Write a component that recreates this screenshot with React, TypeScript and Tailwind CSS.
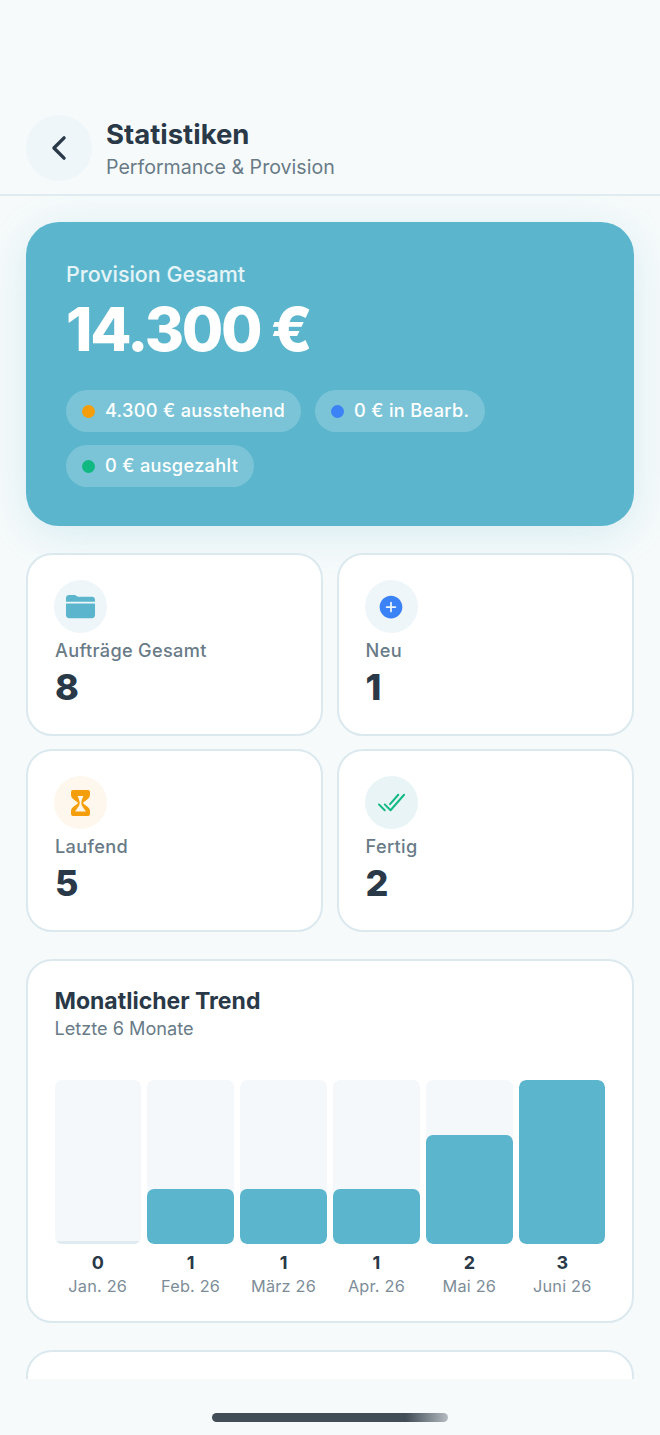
import { IoAddCircle, IoCheckmarkDone, IoChevronBack, IoFolder } from "react-icons/io5";
import type { ReactNode } from "react";

const months = [
  { label: "Jan. 26", value: 0 },
  { label: "Feb. 26", value: 1 },
  { label: "März 26", value: 1 },
  { label: "Apr. 26", value: 1 },
  { label: "Mai 26", value: 2 },
  { label: "Juni 26", value: 3 },
];

function Pill({ dot, children }: { dot: string; children: ReactNode }) {
  return (
    <div className="flex h-[42px] items-center gap-[10px] rounded-full bg-white/20 px-[16px] text-[18.15px] font-medium tracking-[0.33px] text-white">
      <span className={`h-[13px] w-[13px] rounded-full ${dot}`} />
      <span>{children}</span>
    </div>
  );
}

function StatCard({ icon, iconBg, label, value }: { icon: ReactNode; iconBg: string; label: string; value: number }) {
  return (
    <div className="h-[183px] rounded-[26px] border-2 border-[#dbe9ef] bg-white pl-[26px] pt-[25px]">
      <div className={`flex h-[53px] w-[53px] items-center justify-center rounded-full ${iconBg}`}>{icon}</div>
      <div className="mt-[5px] pl-[1px] text-[18.15px] leading-[24px] font-medium tracking-[0.33px] text-[#697b87]">{label}</div>
      <div className="mt-[2px] pl-[1px] text-[36px] leading-[46px] font-extrabold text-[#2a3947]">{value}</div>
    </div>
  );
}

function Hourglass() {
  return (
    <svg width="19" height="26" viewBox="0 0 19 26">
      <path
        fill="#f59e0b"
        d="M2 0H17a2 2 0 0 1 2 2V5C19 9 13 11 12 13C13 15 19 17 19 21V24a2 2 0 0 1-2 2H2a2 2 0 0 1-2-2V21C0 17 6 15 7 13C6 11 0 9 0 5V2a2 2 0 0 1 2-2Z"
      />
      <path
        fill="#fff6e8"
        d="M6.5 6h6C11.5 8 10.5 10 10.3 13C10.5 16 12 17 15 21.5H4C7 17 8.5 16 8.7 13C8.5 10 7.5 8 6.5 6Z"
      />
    </svg>
  );
}

export default function App() {
  return (
    <div className="flex h-[1435px] w-[660px] flex-col overflow-hidden bg-[#f6fafb] font-['Inter',sans-serif]">
      {/* Header */}
      <header className="flex h-[196px] shrink-0 items-start gap-[14px] border-b-2 border-[#dfebf0] px-[26px] pt-[115px]">
        <button type="button" className="flex h-[66px] w-[66px] items-center justify-center rounded-full bg-[#eff6f9] text-[#2a3947]">
          <IoChevronBack size={36} />
        </button>
        <div>
          <h1 className="text-[27.5px] leading-[38px] font-bold text-[#2a3947]">Statistiken</h1>
          <p className="mt-[1px] text-[19.6px] leading-[26px] text-[#697b87]">Performance &amp; Provision</p>
        </div>
      </header>

      <main className="flex h-[1183px] shrink-0 flex-col overflow-hidden px-[26px] pt-[26px]">
        {/* Hero */}
        <section className="h-[304px] shrink-0 rounded-[33px] bg-[#5bb6cd] pl-[40px] pt-[39px] shadow-[0_8px_40px_rgba(91,182,205,0.2)]">
          <div className="text-[21.45px] leading-[26px] font-medium text-white/85">Provision Gesamt</div>
          <div className="mt-[6px] text-[60px] leading-[72px] font-extrabold tracking-[-2.3px] text-white">14.300 €</div>
          <div className="mt-[25px] flex flex-wrap gap-x-[14px] gap-y-[13px]">
            <Pill dot="bg-[#f59e0b]">4.300 € ausstehend</Pill>
            <Pill dot="bg-[#3b82f6]">0 € in Bearb.</Pill>
            <Pill dot="bg-[#10b981]">0 € ausgezahlt</Pill>
          </div>
        </section>

        {/* Stats */}
        <section className="mt-[27px] grid shrink-0 grid-cols-2 gap-x-[13.2px] gap-y-[13px]">
          <StatCard icon={<IoFolder size={31} className="text-[#5bb6cd]" />} iconBg="bg-[#eff6f9]" label="Aufträge Gesamt" value={8} />
          <StatCard icon={<IoAddCircle size={28} className="text-[#3b82f6]" />} iconBg="bg-[#eff6f9]" label="Neu" value={1} />
          <StatCard icon={<Hourglass />} iconBg="bg-[#fef7ed]" label="Laufend" value={5} />
          <StatCard icon={<IoCheckmarkDone size={31} className="text-[#10b981]" />} iconBg="bg-[#e8f4f6]" label="Fertig" value={2} />
        </section>

        {/* Trend */}
        <section className="mt-[27px] h-[364px] shrink-0 rounded-[26px] border-2 border-[#dbe9ef] bg-white px-[26.5px] pt-[25px]">
          <h2 className="text-[23px] leading-[30px] font-bold text-[#2a3947]">Monatlicher Trend</h2>
          <p className="text-[18.15px] leading-[24px] text-[#697b87]">Letzte 6 Monate</p>
          <div className="mt-[40px] grid grid-cols-6 gap-[6.5px]">
            {months.map((m) => (
              <div key={m.label} className="flex flex-col items-center">
                <div className="flex h-[164px] w-full flex-col justify-end overflow-hidden rounded-[7px] bg-[#f4f8fa]">
                  <div
                    className={`w-full rounded-[7px] ${m.value > 0 ? "bg-[#5bb6cd]" : "bg-[#dfebf0]"}`}
                    style={{ height: m.value > 0 ? `${(m.value / 3) * 100}%` : "3px" }}
                  />
                </div>
                <div className="mt-[7px] text-[18px] leading-[23px] font-bold text-[#2a3947]">{m.value}</div>
                <div className="text-[16.3px] leading-[24px] tracking-[0.2px] whitespace-nowrap text-[#7d8d98]">{m.label}</div>
              </div>
            ))}
          </div>
        </section>

        <section className="mt-[27px] h-[120px] shrink-0 rounded-[26px] border-2 border-[#dbe9ef] bg-white" />
      </main>

      {/* Home indicator */}
      <div className="flex flex-1 items-start justify-center pt-[34px]">
        <div className="h-[9px] w-[236px] rounded-full bg-gradient-to-r from-[#414d57] from-82% to-[#b5bcc1]" />
      </div>
    </div>
  );
}
